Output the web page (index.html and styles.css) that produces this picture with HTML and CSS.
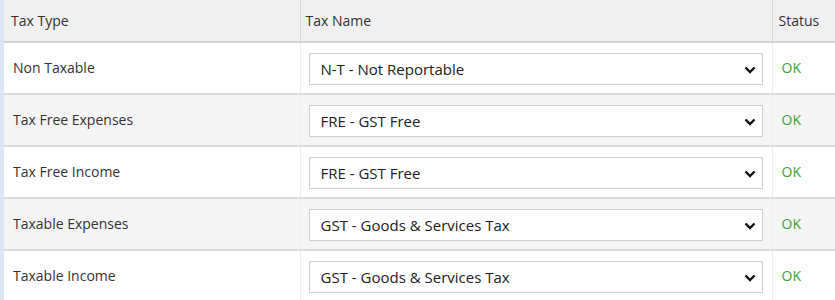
FILE: index.html
```html
<!DOCTYPE html>
<html>
<head>
<meta charset="utf-8">
<link rel="stylesheet" href="styles.css">
</head>
<body>
<div class="frame">
<table class="grid">
  <colgroup><col class="c1"><col class="c2"><col class="c3"></colgroup>
  <thead>
    <tr><th>Tax Type</th><th class="th-name">Tax Name</th><th class="th-status">Status</th></tr>
  </thead>
  <tbody>
    <tr><td class="type">Non Taxable</td><td class="name"><div class="sel"><span>N-T - Not Reportable</span><svg class="chev" width="12" height="8" viewBox="0 0 12 8"><path d="M1.5 1.5 L6 6 L10.5 1.5" fill="none" stroke="#111" stroke-width="2.4"/></svg></div></td><td class="status">OK</td></tr>
    <tr class="alt"><td class="type">Tax Free Expenses</td><td class="name"><div class="sel"><span>FRE - GST Free</span><svg class="chev" width="12" height="8" viewBox="0 0 12 8"><path d="M1.5 1.5 L6 6 L10.5 1.5" fill="none" stroke="#111" stroke-width="2.4"/></svg></div></td><td class="status">OK</td></tr>
    <tr><td class="type">Tax Free Income</td><td class="name"><div class="sel"><span>FRE - GST Free</span><svg class="chev" width="12" height="8" viewBox="0 0 12 8"><path d="M1.5 1.5 L6 6 L10.5 1.5" fill="none" stroke="#111" stroke-width="2.4"/></svg></div></td><td class="status">OK</td></tr>
    <tr class="alt"><td class="type">Taxable Expenses</td><td class="name"><div class="sel"><span>GST - Goods &amp; Services Tax</span><svg class="chev" width="12" height="8" viewBox="0 0 12 8"><path d="M1.5 1.5 L6 6 L10.5 1.5" fill="none" stroke="#111" stroke-width="2.4"/></svg></div></td><td class="status">OK</td></tr>
    <tr><td class="type">Taxable Income</td><td class="name"><div class="sel"><span>GST - Goods &amp; Services Tax</span><svg class="chev" width="12" height="8" viewBox="0 0 12 8"><path d="M1.5 1.5 L6 6 L10.5 1.5" fill="none" stroke="#111" stroke-width="2.4"/></svg></div></td><td class="status">OK</td></tr>
  </tbody>
</table>
</div>
</body>
</html>
```
FILE: styles.css
```css
html, body { margin: 0; padding: 0; background: #fff; }
body { font-family: "Open Sans", "Noto Sans", sans-serif; color: #333; }
.frame { border-left: 4px solid #dce6f2; height: 300px; overflow: hidden; }
.grid { border-collapse: collapse; width: 831px; table-layout: fixed; }
.c1 { width: 296px; }
.c2 { width: 472px; }
.c3 { width: 63px; }
th { background: #f0f0f0; font-weight: normal; text-align: left; font-size: 14px; height: 41px; padding: 0 0 0 7px; border-bottom: 2px solid #d4d4d4; border-right: 1px solid #d8d8d8; color: #333; }
th.th-name { padding-left: 5px; }
th.th-status { border-right: none; padding-left: 6px; }
td { height: 50px; padding: 0; border-bottom: 2px solid #dcdcdc; border-right: 1px solid #ececf8; font-size: 14px; line-height: 18px; }
tr.alt td { background: #f5f5f5; }
td.type { padding-left: 9px; }
td.name { padding: 0 9px 0 8px; }
td.status { border-right: none; color: #3da33d; padding-left: 9px; }
.sel { position: relative; height: 30px; border: 1px solid #cfcfcf; background: #fff; display: flex; align-items: center; padding-left: 11px; font-size: 15px; color: #222; margin-top: 2px; }
.chev { position: absolute; right: 6px; top: 12px; }
.type, .status { vertical-align: middle; }
```
